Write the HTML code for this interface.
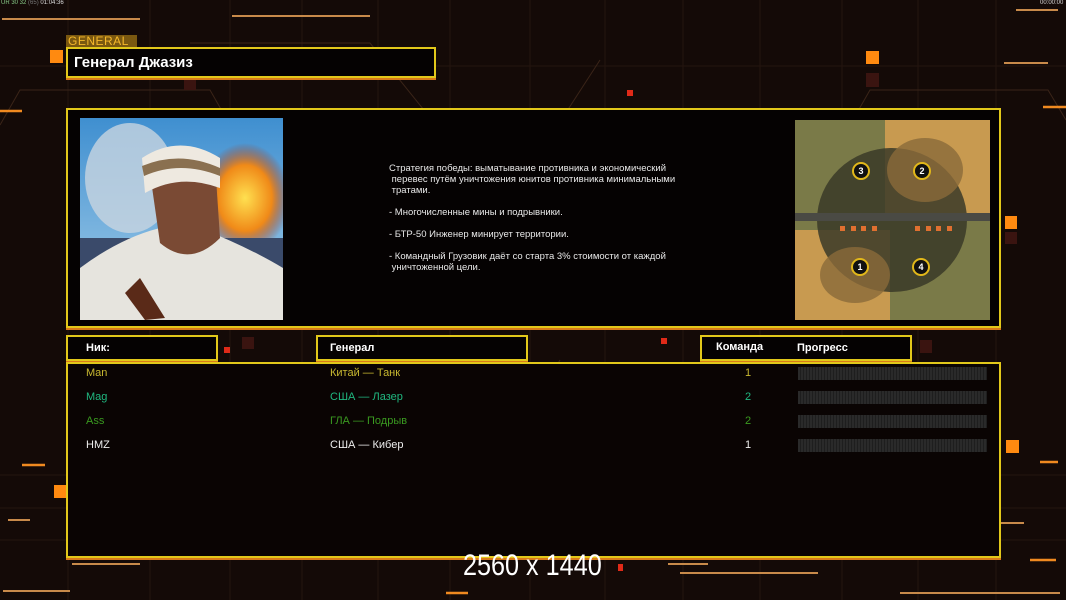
<!DOCTYPE html>
<html><head><meta charset="utf-8"><style>
*{margin:0;padding:0;box-sizing:border-box}
body{width:1066px;height:600px;overflow:hidden;background:#140a07;font-family:"Liberation Sans",sans-serif;position:relative}
.a{position:absolute}
.box{position:absolute;border:2px solid #e2c81a;background:#050202;box-shadow:0 2px 0 #d87a1a}
.t{position:absolute;font-size:11px;white-space:nowrap}
.bar{position:absolute;left:798px;width:189px;height:13px;background:repeating-linear-gradient(90deg,#2a2a2a 0 2px,#1e1e1e 2px 3px)}
</style></head><body>
<svg class="a" style="left:0;top:0" width="1066" height="600">
<g stroke="#24150f" stroke-width="1">
<line x1="68" y1="0" x2="68" y2="600"/><line x1="150" y1="0" x2="150" y2="600"/><line x1="230" y1="0" x2="230" y2="600"/><line x1="302" y1="0" x2="302" y2="600"/><line x1="378" y1="0" x2="378" y2="600"/><line x1="450" y1="0" x2="450" y2="600"/><line x1="530" y1="0" x2="530" y2="600"/><line x1="605" y1="0" x2="605" y2="600"/><line x1="683" y1="0" x2="683" y2="600"/><line x1="760" y1="0" x2="760" y2="600"/><line x1="842" y1="0" x2="842" y2="600"/><line x1="918" y1="0" x2="918" y2="600"/><line x1="996" y1="0" x2="996" y2="600"/>
<line x1="0" y1="66" x2="1066" y2="66"/><line x1="0" y1="508" x2="1066" y2="508"/><line x1="0" y1="540" x2="1066" y2="540"/><line x1="0" y1="475" x2="1066" y2="475"/>
</g>
<g stroke="#3a2418" stroke-width="1" fill="none">
<polyline points="0,125 20,90 210,90 230,125"/><polyline points="850,125 870,90 1048,90 1066,120"/>
<polyline points="190,43 370,43 440,130"/><polyline points="186,470 360,470 380,430"/><polyline points="680,430 700,470 860,470"/>
<line x1="490" y1="230" x2="600" y2="60"/><line x1="440" y1="560" x2="560" y2="360"/>
</g>
<g stroke="#c88a4a" stroke-width="2">
<line x1="2" y1="19" x2="140" y2="19"/><line x1="232" y1="16" x2="370" y2="16"/><line x1="1016" y1="10" x2="1058" y2="10"/><line x1="1004" y1="63" x2="1048" y2="63"/><line x1="8" y1="520" x2="30" y2="520"/><line x1="72" y1="564" x2="140" y2="564"/><line x1="3" y1="591" x2="70" y2="591"/><line x1="668" y1="564" x2="708" y2="564"/><line x1="680" y1="573" x2="818" y2="573"/><line x1="900" y1="593" x2="1060" y2="593"/><line x1="985" y1="523" x2="1024" y2="523"/><line x1="920" y1="270" x2="960" y2="270"/>
</g>
<g stroke="#f08a20" stroke-width="2.5">
<line x1="1043" y1="107" x2="1066" y2="107"/><line x1="0" y1="111" x2="22" y2="111"/><line x1="22" y1="465" x2="45" y2="465"/><line x1="1040" y1="462" x2="1058" y2="462"/><line x1="1030" y1="560" x2="1056" y2="560"/><line x1="446" y1="593" x2="468" y2="593"/>
</g>
<g fill="#ff8a10">
<rect x="50" y="50" width="13" height="13"/><rect x="866" y="51" width="13" height="13"/><rect x="1005" y="216" width="12" height="13"/><rect x="1006" y="440" width="13" height="13"/><rect x="54" y="485" width="12" height="13"/>
</g>
<g fill="#e02a18"><rect x="627" y="90" width="6" height="6"/><rect x="224" y="347" width="6" height="6"/><rect x="661" y="338" width="6" height="6"/><rect x="618" y="564" width="5" height="7"/></g>
<g fill="#3a1410"><rect x="184" y="80" width="12" height="10"/><rect x="866" y="73" width="13" height="14"/><rect x="920" y="340" width="12" height="13"/><rect x="1005" y="232" width="12" height="12"/><rect x="242" y="337" width="12" height="12"/></g>
</svg>
<div class="t" style="left:1px;top:0;font-size:6px;color:#8c8;">UR 30 32 <span style="color:#777">(65)</span> <span style="color:#ddd">01:04:36</span></div>
<div class="t" style="left:1040px;top:0;font-size:6px;color:#ddd">00:00:00</div>

<div class="a" style="left:66px;top:35px;width:71px;height:13px;background:#7a5810;color:#f5b82a;font-size:12px;line-height:13px;padding-left:2px;letter-spacing:0.5px">GENERAL</div>
<div class="box" style="left:66px;top:47px;width:370px;height:31px"></div>
<div class="t" style="left:74px;top:54px;font-size:15px;font-weight:bold;color:#fff">Генерал Джазиз</div>

<div class="box" style="left:66px;top:108px;width:935px;height:220px"></div>
<svg class="a" style="left:80px;top:118px" width="203" height="202" viewBox="0 0 203 202">
<defs><linearGradient id="sky" x1="0" y1="0" x2="0" y2="1"><stop offset="0" stop-color="#3f8fd0"/><stop offset="1" stop-color="#a8d0ea"/></linearGradient>
<radialGradient id="fire" cx=".5" cy=".5" r=".5"><stop offset="0" stop-color="#ffe050"/><stop offset=".6" stop-color="#f08a18"/><stop offset="1" stop-color="#a02a10" stop-opacity="0"/></radialGradient></defs>
<rect width="203" height="202" fill="url(#sky)"/>
<ellipse cx="50" cy="60" rx="45" ry="55" fill="#c8d4e0" opacity=".8"/>
<ellipse cx="165" cy="80" rx="45" ry="55" fill="url(#fire)"/>
<rect x="0" y="120" width="203" height="30" fill="#3a4a6a"/>
<path d="M0 150 Q40 120 80 110 L120 110 Q170 130 203 150 L203 202 L0 202Z" fill="#e6e4de"/>
<path d="M70 55 Q100 20 135 45 L140 120 Q110 150 80 125Z" fill="#7a4a34"/>
<path d="M62 40 Q100 15 140 40 L140 70 Q100 55 65 75Z" fill="#eee9e0"/>
<path d="M62 48 Q100 32 140 50 L140 58 Q100 42 64 58Z" fill="#8a7050"/>
<path d="M60 160 L85 200 L65 202 L45 175Z" fill="#5a2a18"/>
</svg>
<svg class="a" style="left:795px;top:120px" width="195" height="200" viewBox="0 0 195 200">
<rect width="195" height="200" fill="#7a7a48"/>
<rect x="90" width="105" height="100" fill="#c89a50"/>
<rect y="110" width="95" height="90" fill="#c89a50"/>
<ellipse cx="97" cy="100" rx="75" ry="72" fill="#3a3a28" opacity=".85"/>
<ellipse cx="130" cy="50" rx="38" ry="32" fill="#8a6a3a" opacity=".8"/>
<ellipse cx="60" cy="155" rx="35" ry="28" fill="#8a6a3a" opacity=".8"/>
<rect y="93" width="195" height="8" fill="#4a4a44"/>
<g fill="#111" stroke="#e2b81a" stroke-width="2"><circle cx="66" cy="51" r="8"/><circle cx="127" cy="51" r="8"/><circle cx="65" cy="147" r="8"/><circle cx="126" cy="147" r="8"/></g>
<g fill="#fff" font-size="9" font-weight="bold" text-anchor="middle" font-family="Liberation Sans"><text x="66" y="54">3</text><text x="127" y="54">2</text><text x="65" y="150">1</text><text x="126" y="150">4</text></g>
<g fill="#e07030"><rect x="45" y="106" width="5" height="5"/><rect x="56" y="106" width="5" height="5"/><rect x="66" y="106" width="5" height="5"/><rect x="77" y="106" width="5" height="5"/><rect x="120" y="106" width="5" height="5"/><rect x="131" y="106" width="5" height="5"/><rect x="141" y="106" width="5" height="5"/><rect x="152" y="106" width="5" height="5"/></g>
</svg>
<div class="t" style="left:389px;top:163px;color:#e8e8e8;font-size:9.5px;line-height:11px">Стратегия победы: выматывание противника и экономический<br>&nbsp;перевес путём уничтожения юнитов противника минимальными<br>&nbsp;тратами.<br><br>- Многочисленные мины и подрывники.<br><br>- БТР-50 Инженер минирует территории.<br><br>- Командный Грузовик даёт со старта 3% стоимости от каждой<br>&nbsp;уничтоженной цели.</div>

<div class="box" style="left:66px;top:335px;width:152px;height:26px"></div>
<div class="t" style="left:86px;top:342px;font-weight:bold;color:#fff">Ник:</div>
<div class="box" style="left:316px;top:335px;width:212px;height:26px"></div>
<div class="t" style="left:330px;top:342px;font-weight:bold;color:#fff">Генерал</div>
<div class="box" style="left:700px;top:335px;width:212px;height:26px"></div>
<div class="t" style="left:716px;top:341px;font-weight:bold;color:#fff">Команда</div>
<div class="t" style="left:797px;top:342px;font-weight:bold;color:#fff">Прогресс</div>

<div class="box" style="left:66px;top:362px;width:935px;height:196px;background:#0a0403"></div>
<div class="t" style="left:86px;top:367px;color:#c8b830">Man</div><div class="t" style="left:330px;top:367px;color:#c8b830">Китай — Танк</div><div class="t" style="left:745px;top:367px;color:#c8b830">1</div><div class="bar" style="top:367px"></div>
<div class="t" style="left:86px;top:391px;color:#20b880">Mag</div><div class="t" style="left:330px;top:391px;color:#20b880">США — Лазер</div><div class="t" style="left:745px;top:391px;color:#20b880">2</div><div class="bar" style="top:391px"></div>
<div class="t" style="left:86px;top:415px;color:#3a9a20">Ass</div><div class="t" style="left:330px;top:415px;color:#3a9a20">ГЛА — Подрыв</div><div class="t" style="left:745px;top:415px;color:#3a9a20">2</div><div class="bar" style="top:415px"></div>
<div class="t" style="left:86px;top:439px;color:#eee">HMZ</div><div class="t" style="left:330px;top:439px;color:#eee">США — Кибер</div><div class="t" style="left:745px;top:439px;color:#eee">1</div><div class="bar" style="top:439px"></div>

<div class="t" style="left:463px;top:549px;font-size:30px;color:#fff;transform:scaleX(0.84);transform-origin:0 0">2560 x 1440</div>
</body></html>
